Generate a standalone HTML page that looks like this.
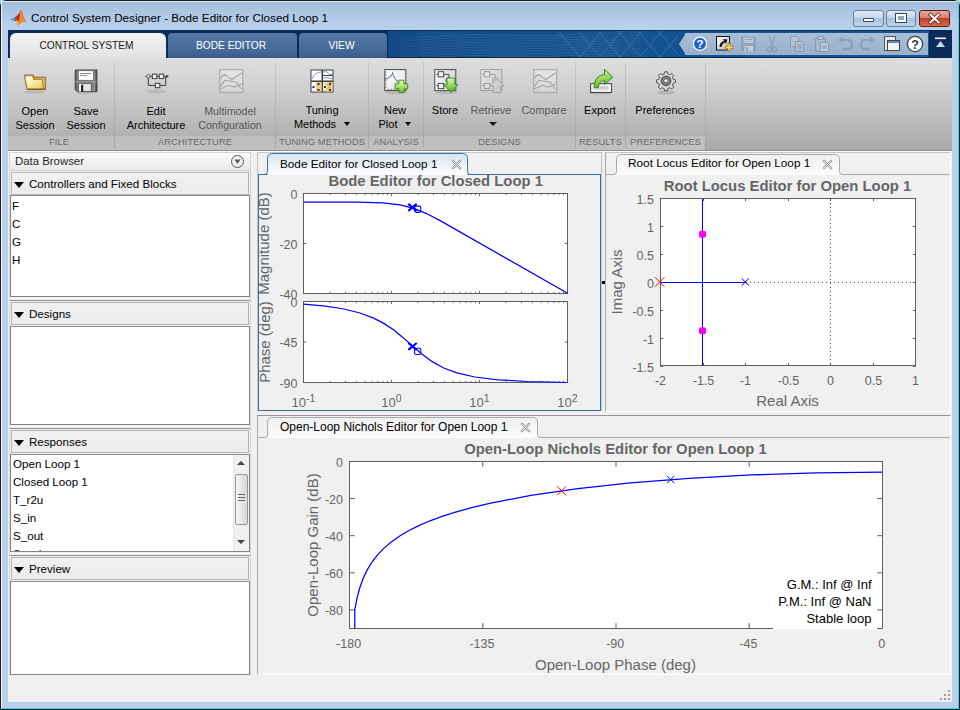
<!DOCTYPE html>
<html><head><meta charset="utf-8"><style>
*{margin:0;padding:0;box-sizing:border-box}
html,body{width:960px;height:710px;overflow:hidden}
body{position:relative;font-family:"Liberation Sans",sans-serif;background:#b9d1ea;color:#000}
.a{position:absolute}
.t{position:absolute;white-space:nowrap;line-height:1}
.tab{position:absolute;top:33px;height:25px;border-radius:4px 4px 0 0;color:#fff;font-size:10.2px;text-align:center;line-height:25px;padding-right:3px}
.lbl{position:absolute;font-size:11px;color:#000;text-align:center;white-space:nowrap;line-height:14px}
.dis{color:#585858}
.sec{position:absolute;top:135px;height:14px;font-size:9.3px;color:#6a6a6a;text-align:center;line-height:14px;letter-spacing:0.1px}
.sep{position:absolute;top:62px;width:1px;height:86px;background:linear-gradient(#c8c8c8,#a4a4a4)}
.hdr{position:absolute;left:11px;width:238px;height:23px;border:1px solid #b4b4b4;background:linear-gradient(#f1f1f1,#ececec);font-size:11.6px;line-height:21px}
.hdr .tri{position:absolute;left:2px;top:8.5px;width:0;height:0;border-left:5.5px solid transparent;border-right:5.5px solid transparent;border-top:6.5px solid #000}
.hdr span{position:absolute;left:17px;top:0px}
.list{position:absolute;left:10px;width:240px;background:#fff;border:1px solid #828790;border-top-color:#8a8f97}
.li{position:absolute;left:1px;font-size:11.6px;line-height:1;white-space:nowrap}
</style></head><body>
<!-- window frame -->
<div class="a" style="left:0;top:0;width:960px;height:710px;border:1px solid #1e1e1e;border-radius:6px 6px 0 0;background:#b9d1ea"></div>
<div class="a" style="left:1px;top:1px;width:958px;height:29px;border-radius:5px 5px 0 0;background:linear-gradient(#a2bddd,#b3cbe7 60%,#b9d1ea)"></div>
<div class="a" style="left:1px;top:1px;width:1px;height:707px;background:#f4f8fc"></div>
<div class="a" style="left:1px;top:1px;width:957px;height:1px;background:#dde8f3;border-radius:5px 5px 0 0"></div>
<div class="a" style="left:1px;top:708px;width:958px;height:1px;background:#3ad0f0"></div>
<div class="a" style="left:958px;top:2px;width:1px;height:707px;background:#3ad0f0"></div>
<!-- matlab logo -->
<svg class="a" style="left:6px;top:6px" width="24" height="24" viewBox="0 0 24 24">
<path d="M4,13.5 L11,10 L14.5,12.5 L10,15.5 Z" fill="#4a9be0"/>
<path d="M9,11.5 L13,7.5 L15,4 L16,5 L17.5,11 L20,16 L17,15 L11.5,19.5 L9.5,15 Z" fill="#b8321c"/>
<path d="M14.5,4.5 L16,5 L17.5,11 L20,16 L17,15 L12,19 L13.5,12 Z" fill="#f08a2c"/>
<path d="M9.5,15 L11.5,19.5 L13,17 L11,14 Z" fill="#f5c040"/>
</svg>
<div class="t" style="left:31px;top:12px;font-size:11.7px;color:#000">Control System Designer - Bode Editor for Closed Loop 1</div>
<!-- window buttons -->
<div class="a" style="left:853px;top:10px;width:31px;height:17px;border:1px solid #6a7f99;border-radius:3px;background:linear-gradient(#dce8f5 0%,#c5d8ee 45%,#a9c3df 50%,#bcd3ec 100%)"></div>
<div class="a" style="left:863px;top:18px;width:11px;height:4px;border:1px solid #39455a;background:#fff;border-radius:1px"></div>
<div class="a" style="left:886px;top:10px;width:30px;height:17px;border:1px solid #6a7f99;border-radius:3px;background:linear-gradient(#dce8f5 0%,#c5d8ee 45%,#a9c3df 50%,#bcd3ec 100%)"></div>
<div class="a" style="left:896px;top:14px;width:10px;height:8px;border:2px solid #fff;outline:1px solid #39455a;background:#8aa4c4"></div>
<div class="a" style="left:919px;top:10px;width:31px;height:17px;border:1px solid #5e1e16;border-radius:3px;background:linear-gradient(#e9a99a 0%,#d9826e 45%,#c2402a 50%,#d56a4f 100%)"></div>
<svg class="a" style="left:927px;top:12px" width="15" height="13" viewBox="0 0 15 13"><path d="M3.5,2.8 L11.5,10.2 M11.5,2.8 L3.5,10.2" stroke="#4a2018" stroke-width="3.6" stroke-linecap="square"/><path d="M3.5,2.8 L11.5,10.2 M11.5,2.8 L3.5,10.2" stroke="#fff" stroke-width="2.2" stroke-linecap="square"/></svg>
<!-- navy strip -->
<div class="a" style="left:8px;top:30px;width:944px;height:28px;background:#0b2a58"></div>
<div class="a" style="left:388px;top:31px;width:541px;height:26px;background:linear-gradient(90deg,#124a88,#14528f 40%,#15549a 100%)"></div>
<svg class="a" style="left:0;top:0" width="960" height="60"><defs><clipPath id="nc"><rect x="388" y="31" width="290" height="26"/></clipPath></defs><g clip-path="url(#nc)"><path d="M580,57 L602,31 M558,31 L580,57 M600,57 L622,31 M578,31 L600,57 M620,57 L642,31 M598,31 L620,57 M640,57 L662,31 M618,31 L640,57 M660,57 L682,31 M638,31 L660,57 M680,57 L702,31 M658,31 L680,57 M700,57 L722,31 M678,31 L700,57" stroke="#6d93c2" stroke-width="0.9" fill="none" opacity="0.45"/><path d="M400,39.0 Q500,29.0 620,41.0 M420,31.0 Q520,41.0 640,30.0 M400,41.6 Q500,31.6 620,43.6 M420,33.6 Q520,43.6 640,32.6 M400,44.2 Q500,34.2 620,46.2 M420,36.2 Q520,46.2 640,35.2 M400,46.8 Q500,36.8 620,48.8 M420,38.8 Q520,48.8 640,37.8 M400,49.4 Q500,39.4 620,51.4 M420,41.4 Q520,51.4 640,40.4 M400,52.0 Q500,42.0 620,54.0 M420,44.0 Q520,54.0 640,43.0 M400,54.6 Q500,44.6 620,56.6 M420,46.6 Q520,56.6 640,45.6 M400,57.2 Q500,47.2 620,59.2 M420,49.2 Q520,59.2 640,48.2 M400,59.8 Q500,49.8 620,61.8 M420,51.8 Q520,61.8 640,50.8 M400,62.4 Q500,52.4 620,64.4 M420,54.4 Q520,64.4 640,53.4" stroke="#6d93c2" stroke-width="0.6" fill="none" opacity="0.25"/></g></svg>
<!-- tabs -->
<div class="tab" style="left:10px;width:156px;background:linear-gradient(#f4f4f4,#e2e2e2);color:#1a1a1a;border-radius:6px 6px 0 0">CONTROL SYSTEM</div>
<div class="tab" style="left:168px;width:129px;background:linear-gradient(#5478a3,#46699a 70%,#3a5c8c)">BODE EDITOR</div>
<div class="tab" style="left:299px;width:88px;background:linear-gradient(#5478a3,#46699a 70%,#3a5c8c)">VIEW</div>
<!-- quick access -->
<div class="a" style="left:685px;top:33px;width:243px;height:22px;background:linear-gradient(#a9bfd7,#98b0cb)"></div>
<svg class="a" style="left:679px;top:33px" width="7" height="22"><path d="M7,0 L0,11 L7,22 Z" fill="#a1b8d1"/></svg>
<div class="a" style="left:929px;top:33px;width:23px;height:22px;background:#0b2b5a"></div>
<svg class="a" style="left:934px;top:36px" width="14" height="14" viewBox="0 0 14 14"><rect x="1" y="1.5" width="11" height="1.6" fill="#f0f4f8"/><path d="M2,11 L6.5,5 L11,11 Z" fill="#c8d6e6"/></svg>
<!-- toolstrip -->
<div class="a" style="left:8px;top:58px;width:944px;height:92px;background:linear-gradient(#dedede 0%,#cfcfcf 35%,#bababa 70%,#a9a9a9 100%)"></div>
<div class="a" style="left:8px;top:136px;width:697px;height:14px;background:linear-gradient(#bdbdbd,#c1c1c1)"></div>
<div class="a" style="left:8px;top:150px;width:944px;height:552px;background:#f0f0f0"></div>
<div class="a" style="left:8px;top:150px;width:944px;height:1px;background:#8e8e8e"></div>
<div class="a" style="left:8px;top:151px;width:944px;height:1px;background:#fbfbfb"></div>
<!-- separators -->
<div class="sep" style="left:114px"></div>
<div class="sep" style="left:275px"></div>
<div class="sep" style="left:368px"></div>
<div class="sep" style="left:423px"></div>
<div class="sep" style="left:575px"></div>
<div class="sep" style="left:625px"></div>
<div class="sep" style="left:705px"></div>
<!-- section labels -->
<div class="sec" style="left:6px;width:106px">FILE</div>
<div class="sec" style="left:115px;width:160px">ARCHITECTURE</div>
<div class="sec" style="left:276px;width:92px">TUNING METHODS</div>
<div class="sec" style="left:369px;width:54px">ANALYSIS</div>
<div class="sec" style="left:424px;width:151px">DESIGNS</div>
<div class="sec" style="left:576px;width:49px">RESULTS</div>
<div class="sec" style="left:626px;width:79px">PREFERENCES</div>
<!-- button labels -->
<div class="lbl" style="left:5px;width:60px;top:104px">Open<br>Session</div>
<div class="lbl" style="left:56px;width:60px;top:104px">Save<br>Session</div>
<div class="lbl" style="left:116px;width:80px;top:104px">Edit<br>Architecture</div>
<div class="lbl dis" style="left:190px;width:80px;top:104px;font-size:10.7px">Multimodel<br>Configuration</div>
<div class="lbl" style="left:282px;width:80px;top:103px">Tuning<br>Methods<i style="display:inline-block;width:0;height:0;border-left:3.5px solid transparent;border-right:3.5px solid transparent;border-top:4px solid #000;margin-left:8px;vertical-align:2px"></i></div>
<div class="lbl" style="left:365px;width:60px;top:103px">New<br>Plot<i style="display:inline-block;width:0;height:0;border-left:3.5px solid transparent;border-right:3.5px solid transparent;border-top:4px solid #000;margin-left:8px;vertical-align:2px"></i></div>
<div class="lbl" style="left:415px;width:60px;top:103px">Store</div>
<div class="lbl dis" style="left:461px;width:60px;top:103px">Retrieve<br><i style="display:inline-block;width:0;height:0;border-left:4px solid transparent;border-right:4px solid transparent;border-top:4.5px solid #1a1a1a;margin-left:3px;vertical-align:2px"></i></div>
<div class="lbl dis" style="left:514px;width:60px;top:103px">Compare</div>
<div class="lbl" style="left:570px;width:60px;top:103px">Export</div>
<div class="lbl" style="left:625px;width:80px;top:103px">Preferences</div>
<!-- icons -->
<svg class="a" style="left:18px;top:64px" width="32" height="32" viewBox="0 0 32 32">
<defs><linearGradient id="fold" x1="0" y1="0" x2="1" y2="1"><stop offset="0" stop-color="#ffffff"/><stop offset="0.35" stop-color="#fbf3c8"/><stop offset="0.75" stop-color="#f1d878"/><stop offset="1" stop-color="#e0bc50"/></linearGradient>
<linearGradient id="foldb" x1="0" y1="0" x2="1" y2="0"><stop offset="0" stop-color="#b88a34"/><stop offset="1" stop-color="#d8b56a"/></linearGradient></defs>
<ellipse cx="16" cy="28" rx="10" ry="1.8" fill="#000" opacity="0.1"/>
<path d="M6.3,11 H15.5 L16,13.1 H27.6 V25.3 H9 Z" fill="url(#foldb)" stroke="#8f6a22" stroke-width="0.9"/>
<path d="M6.8,11.8 H14.6 L15.4,15.4 H24.2 L25.8,25 H9.2 Z" fill="url(#fold)" stroke="#a57b26" stroke-width="0.8"/>
<path d="M9.2,25.2 H27.6" stroke="#6e5010" stroke-width="1"/>
</svg>
<svg class="a" style="left:70px;top:64px" width="32" height="32" viewBox="0 0 32 32">
<defs><linearGradient id="flp" x1="0" y1="0" x2="1" y2="0"><stop offset="0" stop-color="#4a4a4a"/><stop offset="0.12" stop-color="#8a8a8a"/><stop offset="0.5" stop-color="#7a7a7a"/><stop offset="0.88" stop-color="#8a8a8a"/><stop offset="1" stop-color="#454545"/></linearGradient></defs>
<ellipse cx="16" cy="29" rx="10" ry="1.5" fill="#000" opacity="0.08"/>
<path d="M5.2,5.9 H27 V27.7 H7.2 L5.2,25.7 Z" fill="url(#flp)" stroke="#3a3a3a" stroke-width="0.8"/>
<rect x="8.3" y="6.8" width="15.1" height="9.4" fill="#fff" stroke="#555" stroke-width="0.6"/>
<rect x="10" y="9" width="11" height="0.9" fill="#777"/><rect x="10" y="11" width="7" height="0.9" fill="#888"/>
<rect x="5.5" y="17.2" width="21.2" height="1.4" fill="#9a9a9a"/>
<rect x="8.6" y="19.4" width="12.6" height="8.2" fill="#e2e2e2" stroke="#333" stroke-width="0.6"/>
<rect x="9" y="19.8" width="2" height="7.6" fill="#fff"/>
<rect x="11" y="20.8" width="2.2" height="6.8" fill="#222"/>
</svg>
<svg class="a" style="left:140px;top:64px" width="32" height="32" viewBox="0 0 32 32">
<ellipse cx="16.5" cy="27.5" rx="10" ry="2" fill="#000" opacity="0.09"/>
<path d="M5.2,12.4 H27 M8.3,12.4 V21.4 H25.7 V12.4" stroke="#3e3e3e" stroke-width="1" fill="none"/>
<path d="M26.3,10.5 L28.8,12.4 L26.3,14.3 Z" fill="#3e3e3e"/>
<circle cx="8.3" cy="12.4" r="1.7" fill="#fff" stroke="#3e3e3e" stroke-width="0.9"/>
<rect x="12.3" y="10.1" width="4.5" height="4.5" fill="#eee" stroke="#3e3e3e" stroke-width="1"/>
<rect x="19.2" y="10.1" width="4.5" height="4.5" fill="#eee" stroke="#3e3e3e" stroke-width="1"/>
<rect x="15.3" y="19.3" width="4.5" height="4.4" fill="#eee" stroke="#3e3e3e" stroke-width="1"/>
</svg>
<svg class="a" style="left:214px;top:64px" width="32" height="32" viewBox="0 0 32 32">
<defs><linearGradient id="cg214" x1="0" y1="0" x2="0" y2="1"><stop offset="0" stop-color="#e6e6e6"/><stop offset="1" stop-color="#d6d6d6"/></linearGradient></defs>
<rect x="5.7" y="5.7" width="23" height="23" fill="url(#cg214)" stroke="#a9a9a9" stroke-width="1.1"/>
<path d="M6.3,14 L10.3,10.4 L17.8,15.5 L27.5,9 M6.3,22.3 L11,16.3 L22.5,18.2 L27,25 M6.3,25 L14.7,21.3 L19.8,23.1 L27.5,20.3" stroke="#a5a5a5" stroke-width="1.1" fill="none"/>
<path d="M8,28 v-1.3 M11,28 v-1.3 M14,28 v-1.3 M17,28 v-1.3 M20,28 v-1.3 M23,28 v-1.3 M26,28 v-1.3 M6.5,8 h1.3 M6.5,11 h1.3 M6.5,14 h1.3 M6.5,17 h1.3 M6.5,20 h1.3 M6.5,23 h1.3" stroke="#b8b8b8" stroke-width="0.9"/>
</svg>
<svg class="a" style="left:309px;top:68px" width="26" height="26" viewBox="0 0 26 26">
<rect x="1.5" y="1.5" width="23" height="23" fill="#3d3d3d"/>
<rect x="2.5" y="2.5" width="10" height="10" fill="#fff"/><rect x="14" y="2.5" width="9.5" height="4.5" fill="#fff"/><rect x="14" y="8" width="9.5" height="4.5" fill="#fff"/>
<rect x="2.5" y="14" width="10" height="9.5" fill="#fff"/><rect x="14" y="14" width="9.5" height="9.5" fill="#fff"/>
<rect x="7" y="14" width="5.5" height="9.5" fill="#f1cf7a"/><rect x="18" y="14" width="5.5" height="9.5" fill="#f1cf7a"/>
<path d="M3,11 Q6,4 12,4 M14,4 Q17,2 19,5 T23.5,6 M14,10 Q18,9 23.5,11" stroke="#6a8bb0" stroke-width="0.9" fill="none"/>
<path d="M15,15 L21,19 L15,23" stroke="#e8b040" stroke-width="1.2" fill="none"/>
<g fill="#1a3464"><rect x="3.5" y="18" width="2" height="2"/><rect x="8.5" y="15" width="2" height="2"/><rect x="8.5" y="21" width="2" height="2"/><rect x="20" y="15" width="2" height="2"/><rect x="20" y="21" width="2" height="2"/><rect x="15" y="18" width="2" height="2"/></g>
</svg>
<svg class="a" style="left:380px;top:64px" width="32" height="32" viewBox="0 0 32 32">
<defs><linearGradient id="npbg" x1="0" y1="0" x2="1" y2="1"><stop offset="0" stop-color="#fff"/><stop offset="1" stop-color="#e2e2e2"/></linearGradient>
<linearGradient id="grn2" x1="0" y1="0" x2="0" y2="1"><stop offset="0" stop-color="#e8f8c0"/><stop offset="0.55" stop-color="#a8dc64"/><stop offset="1" stop-color="#6cbf35"/></linearGradient></defs>
<ellipse cx="16" cy="28.5" rx="11" ry="1.8" fill="#000" opacity="0.1"/>
<rect x="4.8" y="5.6" width="21" height="21" fill="url(#npbg)" stroke="#4a4a4a" stroke-width="1"/>
<path d="M5.3,8 h1.2 M5.3,11 h1.2 M5.3,14 h1.2 M5.3,17 h1.2 M5.3,20 h1.2 M5.3,23 h1.2 M8,26 v-1.2 M11,26 v-1.2 M14,26 v-1.2 M17,26 v-1.2" stroke="#4a4a4a" stroke-width="0.9"/>
<path d="M5,15.3 Q10,14.5 12.6,9.2 Q14.5,15 18.5,18.3 Q21,19.8 25,19.8" stroke="#3a5f8f" stroke-width="1.2" fill="none" stroke-dasharray="1.2,0.6"/>
<path d="M18.9,16.2 h5 v3.6 h3.8 v5 h-3.8 v3.8 h-5 v-3.8 h-3.8 v-5 h3.8 z" fill="url(#grn2)" stroke="#2e8a1e" stroke-width="0.9"/>
</svg>
<svg class="a" style="left:430px;top:64px" width="32" height="32" viewBox="0 0 32 32">
<defs><linearGradient id="stbg" x1="0" y1="0" x2="1" y2="0.3"><stop offset="0" stop-color="#fdfdfd"/><stop offset="1" stop-color="#d4d4d4"/></linearGradient>
<linearGradient id="grn" x1="0" y1="0" x2="0" y2="1"><stop offset="0" stop-color="#e4f7c4"/><stop offset="0.5" stop-color="#9ad35c"/><stop offset="1" stop-color="#4fa52a"/></linearGradient></defs>
<ellipse cx="16" cy="28.5" rx="11" ry="1.8" fill="#000" opacity="0.1"/>
<rect x="4.8" y="5.6" width="21" height="21" fill="url(#stbg)" stroke="#4a4a4a" stroke-width="1"/>
<path d="M6.3,10.4 H8.2 M13.7,10.4 H19 V14 M6.3,21.6 H8.2 M13.7,21.6 H15.5" stroke="#3a3a3a" stroke-width="0.9" fill="none"/>
<rect x="8.2" y="7.7" width="5.5" height="5.2" fill="#f0f0f0" stroke="#3a3a3a" stroke-width="0.9"/>
<rect x="8.2" y="19.4" width="5.5" height="5.2" fill="#f0f0f0" stroke="#3a3a3a" stroke-width="0.9"/>
<path d="M19.5,14 A2.6,2.8 0 1 0 19.5,19" stroke="#3a3a3a" stroke-width="0.9" fill="none"/>
<path d="M17,14 H24.8 V20.7 H28 L21,28.6 L14,20.7 H17 Z" fill="url(#grn)" stroke="#2f8a1f" stroke-width="0.9"/>
</svg>
<svg class="a" style="left:476px;top:64px" width="32" height="32" viewBox="0 0 32 32" opacity="0.42">
<defs><linearGradient id="stbg2" x1="0" y1="0" x2="1" y2="0.3"><stop offset="0" stop-color="#fdfdfd"/><stop offset="1" stop-color="#cfcfcf"/></linearGradient></defs>
<rect x="4.8" y="5.6" width="21" height="21" fill="url(#stbg2)" stroke="#555" stroke-width="1"/>
<path d="M6.3,10.4 H8.2 M13.7,10.4 H19 V14 M6.3,21.6 H8.2" stroke="#444" stroke-width="0.9" fill="none"/>
<rect x="8.2" y="7.7" width="5.5" height="5.2" fill="#f0f0f0" stroke="#444" stroke-width="0.9"/>
<rect x="8.2" y="19.4" width="5.5" height="5.2" fill="#f0f0f0" stroke="#444" stroke-width="0.9"/>
<circle cx="19.5" cy="16.5" r="2.8" fill="#ddd" stroke="#444" stroke-width="0.9"/>
<path d="M17,28.6 H24.8 V21.9 H28 L21,14 L14,21.9 H17 Z" fill="#c8c8c8" stroke="#555" stroke-width="0.9"/>
</svg>
<svg class="a" style="left:528px;top:64px" width="32" height="32" viewBox="0 0 32 32">
<defs><linearGradient id="cg528" x1="0" y1="0" x2="0" y2="1"><stop offset="0" stop-color="#e6e6e6"/><stop offset="1" stop-color="#d6d6d6"/></linearGradient></defs>
<rect x="5.7" y="5.7" width="23" height="23" fill="url(#cg528)" stroke="#a9a9a9" stroke-width="1.1"/>
<path d="M6.3,14 L10.3,10.4 L17.8,15.5 L27.5,9 M6.3,22.3 L11,16.3 L22.5,18.2 L27,25 M6.3,25 L14.7,21.3 L19.8,23.1 L27.5,20.3" stroke="#a5a5a5" stroke-width="1.1" fill="none"/>
<path d="M8,28 v-1.3 M11,28 v-1.3 M14,28 v-1.3 M17,28 v-1.3 M20,28 v-1.3 M23,28 v-1.3 M26,28 v-1.3 M6.5,8 h1.3 M6.5,11 h1.3 M6.5,14 h1.3 M6.5,17 h1.3 M6.5,20 h1.3 M6.5,23 h1.3" stroke="#b8b8b8" stroke-width="0.9"/>
</svg>
<svg class="a" style="left:584px;top:64px" width="32" height="32" viewBox="0 0 32 32">
<defs><linearGradient id="extr" x1="0" y1="0" x2="0" y2="1"><stop offset="0" stop-color="#fafafa"/><stop offset="1" stop-color="#e8e8e8"/></linearGradient>
<linearGradient id="grn3" x1="0" y1="0" x2="0.3" y2="1"><stop offset="0" stop-color="#e6f8c8"/><stop offset="0.5" stop-color="#a6d96a"/><stop offset="1" stop-color="#5fb52f"/></linearGradient></defs>
<ellipse cx="16" cy="29.5" rx="11" ry="1.5" fill="#000" opacity="0.1"/>
<rect x="6.6" y="19.7" width="21" height="8.8" fill="url(#extr)" stroke="#3f3f3f" stroke-width="1"/>
<rect x="9.5" y="22.2" width="15" height="3.3" fill="#cdcdcd"/>
<path d="M10.1,23.6 C10.1,15.5 14,11 20.5,10.6 L20.5,5.4 L28.8,13.1 L20.5,20.5 L20.5,16.6 C17.2,16.6 15,19.2 14,23.6 Z" fill="url(#grn3)" stroke="#2e8a1e" stroke-width="1"/>
</svg>
<svg class="a" style="left:654px;top:69px" width="24" height="26" viewBox="0 0 24 26"><ellipse cx="12" cy="23.5" rx="9" ry="2" fill="#000" opacity="0.12"/><g transform="translate(12,11.8) scale(0.9) translate(-12,-11.5)">

<path d="M10.5,1.5 h3 l0.6,2.4 l2.2,0.9 l2.1,-1.3 l2.1,2.1 l-1.3,2.1 l0.9,2.2 l2.4,0.6 v3 l-2.4,0.6 l-0.9,2.2 l1.3,2.1 l-2.1,2.1 l-2.1,-1.3 l-2.2,0.9 l-0.6,2.4 h-3 l-0.6,-2.4 l-2.2,-0.9 l-2.1,1.3 l-2.1,-2.1 l1.3,-2.1 l-0.9,-2.2 l-2.4,-0.6 v-3 l2.4,-0.6 l0.9,-2.2 l-1.3,-2.1 l2.1,-2.1 l2.1,1.3 l2.2,-0.9 Z" fill="#d8d8d8" stroke="#444" stroke-width="1"/>
<circle cx="12" cy="11.5" r="6" fill="#555"/>
<circle cx="12" cy="11.5" r="4.5" fill="#888"/>
<circle cx="12" cy="11.5" r="2.4" fill="#eee" stroke="#333" stroke-width="0.8"/>
</g></svg>
<!-- quick access icons -->
<svg class="a" style="left:691px;top:35px" width="18" height="18" viewBox="0 0 18 18"><circle cx="9" cy="8.7" r="6.6" fill="#1a63c9" stroke="#fff" stroke-width="1.3"/><text x="9" y="13" text-anchor="middle" font-family="Liberation Sans" font-weight="bold" font-size="11.5" fill="#fff">?</text></svg>
<svg class="a" style="left:715px;top:35px" width="19" height="18" viewBox="0 0 19 18"><defs><linearGradient id="sc" x1="0" y1="0" x2="1" y2="1"><stop offset="0" stop-color="#fff"/><stop offset="1" stop-color="#bbb"/></linearGradient></defs><rect x="1.5" y="1.5" width="13" height="13.5" fill="url(#sc)" stroke="#111" stroke-width="1"/><path d="M4.5,12 Q4.5,7 9,6 L8,4 L12.5,4.5 L11,9 L10,7.5 Q7,8.5 6.5,12 Z" fill="#1a1a1a"/><path d="M10.5,11 h2.5 v-2.5 h2.6 v2.5 h2.5 v2.6 h-2.5 v2.5 h-2.6 v-2.5 h-2.5z" fill="#f6d36a" stroke="#a27a1c" stroke-width="0.8"/></svg>
<g></g>
<svg class="a" style="left:740px;top:35px" width="17" height="18" viewBox="0 0 17 18"><path d="M1,1.5 h15 v15 h-13 l-2,-2z" fill="#8fa1b6"/><rect x="3.5" y="2.5" width="10" height="5.5" fill="#b9c6d6"/><rect x="5" y="4" width="7" height="1" fill="#8fa1b6"/><rect x="4.5" y="11" width="8.5" height="5.5" fill="#c4d0de"/><rect x="6" y="12" width="2.2" height="4.5" fill="#8fa1b6"/></svg>
<svg class="a" style="left:765px;top:35px" width="14" height="18" viewBox="0 0 14 18" opacity="0.6"><path d="M4,1 L8,12 M10,1 L6,12" stroke="#8090a4" stroke-width="1.2"/><circle cx="4.5" cy="14.5" r="2.3" fill="none" stroke="#8090a4" stroke-width="1.2"/><circle cx="9.5" cy="14.5" r="2.3" fill="none" stroke="#8090a4" stroke-width="1.2"/></svg>
<svg class="a" style="left:789px;top:35px" width="16" height="18" viewBox="0 0 16 18" opacity="0.6"><path d="M1.5,1.5 h6 l2,2 v8 h-8z" fill="#c4ceda" stroke="#7a889a"/><path d="M6.5,6.5 h6 l2,2 v8 h-8z" fill="#c4ceda" stroke="#7a889a"/><path d="M8,10 h5 M8,12 h5 M8,14 h5" stroke="#7a889a"/></svg>
<svg class="a" style="left:814px;top:35px" width="16" height="18" viewBox="0 0 16 18" opacity="0.6"><rect x="1.5" y="3.5" width="10" height="13" fill="#b0bccb" stroke="#7a889a"/><rect x="4" y="1.5" width="5" height="3" fill="#c4ceda" stroke="#7a889a"/><path d="M6.5,7.5 h6 l2,2 v7 h-8z" fill="#d4dde7" stroke="#7a889a"/><path d="M8,11 h5 M8,13 h5" stroke="#7a889a"/></svg>
<svg class="a" style="left:837px;top:36px" width="17" height="16" viewBox="0 0 17 16" opacity="0.6"><path d="M4,4 L11,4 Q15,4 15,8.5 Q15,13 11,13 L6,13" stroke="#7e8ea2" stroke-width="2.2" fill="none"/><path d="M1,4 L6,0.5 L6,7.5 Z" fill="#7e8ea2"/></svg>
<svg class="a" style="left:859px;top:36px" width="17" height="16" viewBox="0 0 17 16" opacity="0.6"><path d="M13,4 L6,4 Q2,4 2,8.5 Q2,13 6,13 L11,13" stroke="#7e8ea2" stroke-width="2.2" fill="none"/><path d="M16,4 L11,0.5 L11,7.5 Z" fill="#7e8ea2"/></svg>
<svg class="a" style="left:883px;top:35px" width="18" height="18" viewBox="0 0 18 18"><rect x="1.5" y="1.5" width="11" height="14" fill="#e8e8e8" stroke="#555"/><rect x="4.5" y="5.5" width="12" height="10" fill="#f4f4f4" stroke="#444"/><rect x="5" y="6" width="11" height="2" fill="#5b8fd0"/></svg>
<svg class="a" style="left:906px;top:35px" width="18" height="18" viewBox="0 0 18 18"><circle cx="9" cy="9" r="7.6" fill="#fff" stroke="#3a4a5e" stroke-width="1.4"/><text x="9" y="13.6" text-anchor="middle" font-family="Liberation Sans" font-weight="bold" font-size="12.5" fill="#2b3a4e">?</text></svg>
<!-- left panel -->
<div class="a" style="left:9px;top:152px;width:242px;height:523px;border:1px solid #d4d4d4;background:#f0f0f0"></div>
<div class="a" style="left:10px;top:153px;width:240px;height:18px;background:linear-gradient(#fbfbfb,#e9e9e9);border-bottom:1px solid #cfcfcf"></div>
<div class="t" style="left:15px;top:156px;font-size:11.4px;color:#1e1e1e">Data Browser</div>
<svg class="a" style="left:230px;top:154px" width="15" height="15" viewBox="0 0 15 15"><circle cx="7.5" cy="7.5" r="6" fill="none" stroke="#555" stroke-width="1"/><path d="M4.5,5.5 L10.5,5.5 L7.5,10 Z" fill="#555"/></svg>

<div class="hdr" style="top:172px"><div class="tri"></div><span>Controllers and Fixed Blocks</span></div>
<div class="list" style="top:195px;height:102px">
<div class="li" style="top:4px">F</div><div class="li" style="top:22px">C</div><div class="li" style="top:40px">G</div><div class="li" style="top:58px">H</div>
</div>
<div class="a" style="left:10px;top:300px;width:240px;height:1px;background:#8e8e8e"></div><div class="a" style="left:10px;top:298px;width:240px;height:1px;background:#fafafa"></div><div class="hdr" style="top:302px"><div class="tri"></div><span>Designs</span></div>
<div class="list" style="top:326px;height:99px"></div>
<div class="a" style="left:10px;top:428px;width:240px;height:1px;background:#8e8e8e"></div><div class="a" style="left:10px;top:426px;width:240px;height:1px;background:#fafafa"></div><div class="hdr" style="top:430px"><div class="tri"></div><span>Responses</span></div>
<div class="list" style="top:454px;height:98px;overflow:hidden">
<div class="li" style="top:3px;left:2px">Open Loop 1</div><div class="li" style="top:21px;left:2px">Closed Loop 1</div><div class="li" style="top:39px;left:2px">T_r2u</div><div class="li" style="top:57px;left:2px">S_in</div><div class="li" style="top:75px;left:2px">S_out</div><div class="li" style="top:93px;left:2px">S_ysig</div>
<div class="a" style="left:222px;top:0;width:16px;height:96px;background:#f0f0f0;border-left:1px solid #e8e8e8"></div>
<svg class="a" style="left:225px;top:5px" width="10" height="6"><path d="M1,5 L5,1 L9,5Z" fill="#444"/></svg>
<svg class="a" style="left:225px;top:84px" width="10" height="6"><path d="M1,1 L5,5 L9,1Z" fill="#444"/></svg>
<div class="a" style="left:224px;top:19px;width:13px;height:51px;border:1px solid #9a9a9a;border-radius:2px;background:linear-gradient(90deg,#f6f6f6,#d8d8d8)"></div>
<div class="a" style="left:227px;top:39px;width:7px;height:1px;background:#666"></div>
<div class="a" style="left:227px;top:42px;width:7px;height:1px;background:#666"></div>
<div class="a" style="left:227px;top:45px;width:7px;height:1px;background:#666"></div>
</div>
<div class="a" style="left:10px;top:555px;width:240px;height:1px;background:#8e8e8e"></div><div class="a" style="left:10px;top:553px;width:240px;height:1px;background:#fafafa"></div><div class="hdr" style="top:557px"><div class="tri"></div><span>Preview</span></div>
<div class="list" style="top:581px;height:94px"></div>
<!-- editors frame -->
<div class="a" style="left:257px;top:152px;width:345px;height:259px;border:1px solid #c4c4c4;border-bottom:none"></div>
<div class="a" style="left:605px;top:152px;width:346px;height:260px;border-left:1px solid #a9a9a9;border-top:1px solid #c4c4c4;border-right:1px solid #fff;border-bottom:1px solid #fff"></div>
<div class="a" style="left:257px;top:415px;width:694px;height:260px;border-left:1px solid #a9a9a9;border-top:1px solid #959595;border-right:1px solid #fff;border-bottom:1px solid #fff"></div>
<!-- bode tab -->
<div class="a" style="left:258px;top:174px;width:343px;height:237px;border:1px solid #3f6ea6"></div>
<svg class="a" style="left:0;top:0" width="960" height="710"><defs><linearGradient id="tgb" x1="0" y1="0" x2="0" y2="1"><stop offset="0" stop-color="#d6e3f1"/><stop offset="1" stop-color="#ffffff"/></linearGradient></defs>
<path d="M267.5,175 V158.5 Q267.5,153.5 272.5,153.5 H462.5 Q467.5,153.5 467.5,158.5 V175" fill="url(#tgb)" stroke="none"/>
<path d="M258.5,174.5 H264.5 Q267.5,174.5 267.5,171.5 V158.5 Q267.5,153.5 272.5,153.5 H462.5 Q467.5,153.5 467.5,158.5 V171.5 Q467.5,174.5 470.5,174.5 H600.5" fill="none" stroke="#3f6ea6" stroke-width="1"/></svg>
<div class="t" style="left:280px;top:158px;font-size:11.75px">Bode Editor for Closed Loop 1</div>
<svg class="a" style="left:451px;top:159px" width="11" height="11" viewBox="0 0 11 11"><path d="M1.8,1.8 L9.2,9.2 M9.2,1.8 L1.8,9.2" stroke="#959595" stroke-width="2.3" stroke-linecap="round"/><path d="M1.8,1.8 L9.2,9.2 M9.2,1.8 L1.8,9.2" stroke="#eef1f5" stroke-width="1" stroke-linecap="round"/></svg>
<!-- RL tab -->
<svg class="a" style="left:0;top:0" width="960" height="710"><defs><linearGradient id="tgr" x1="0" y1="0" x2="0" y2="1"><stop offset="0" stop-color="#f0f0f0"/><stop offset="1" stop-color="#fcfcfc"/></linearGradient></defs>
<path d="M616.5,175 V159.5 Q616.5,154.5 621.5,154.5 H834.5 Q839.5,154.5 839.5,159.5 V175" fill="url(#tgr)" stroke="none"/>
<path d="M605.5,174.5 H613.5 Q616.5,174.5 616.5,171.5 V159.5 Q616.5,154.5 621.5,154.5 H834.5 Q839.5,154.5 839.5,159.5 V171.5 Q839.5,174.5 842.5,174.5 H950" fill="none" stroke="#a9a9a9" stroke-width="1"/></svg>
<div class="t" style="left:628px;top:158px;font-size:11.8px">Root Locus Editor for Open Loop 1</div>
<svg class="a" style="left:822px;top:159px" width="11" height="11" viewBox="0 0 11 11"><path d="M1.8,1.8 L9.2,9.2 M9.2,1.8 L1.8,9.2" stroke="#959595" stroke-width="2.3" stroke-linecap="round"/><path d="M1.8,1.8 L9.2,9.2 M9.2,1.8 L1.8,9.2" stroke="#eef1f5" stroke-width="1" stroke-linecap="round"/></svg>
<!-- Nichols tab -->
<svg class="a" style="left:0;top:0" width="960" height="710"><defs><linearGradient id="tgn" x1="0" y1="0" x2="0" y2="1"><stop offset="0" stop-color="#f0f0f0"/><stop offset="1" stop-color="#fcfcfc"/></linearGradient></defs>
<path d="M267.5,438 V422.5 Q267.5,417.5 272.5,417.5 H532.5 Q537.5,417.5 537.5,422.5 V438" fill="url(#tgn)" stroke="none"/>
<path d="M257.5,437.5 H264.5 Q267.5,437.5 267.5,434.5 V422.5 Q267.5,417.5 272.5,417.5 H532.5 Q537.5,417.5 537.5,422.5 V434.5 Q537.5,437.5 540.5,437.5 H950" fill="none" stroke="#a9a9a9" stroke-width="1"/></svg>
<div class="t" style="left:280px;top:421px;font-size:12px">Open-Loop Nichols Editor for Open Loop 1</div>
<svg class="a" style="left:520px;top:422px" width="11" height="11" viewBox="0 0 11 11"><path d="M1.8,1.8 L9.2,9.2 M9.2,1.8 L1.8,9.2" stroke="#959595" stroke-width="2.3" stroke-linecap="round"/><path d="M1.8,1.8 L9.2,9.2 M9.2,1.8 L1.8,9.2" stroke="#eef1f5" stroke-width="1" stroke-linecap="round"/></svg>
<div class="a" style="left:602px;top:281px;width:3px;height:3px;background:#000"></div>
<!-- grip -->
<div class="a" style="left:948px;top:690px;width:2px;height:2px;background:#a19f8d;box-shadow:-4px 4px 0 #a19f8d,0 4px 0 #a19f8d,-8px 8px 0 #a19f8d,-4px 8px 0 #a19f8d,0 8px 0 #a19f8d"></div>
<svg class="a" style="left:0;top:0" width="960" height="710" viewBox="0 0 960 710" font-family="Liberation Sans, sans-serif">
<text x="435.7" y="186" font-size="14.85" fill="#666666" text-anchor="middle" font-weight="bold" >Bode Editor for Closed Loop 1</text>
<rect x="303.5" y="193.5" width="264.0" height="100.0" fill="#fff" stroke="#5e5e5e" stroke-width="1"/>
<path d="M329.99,293.5 v-1.6 M329.99,193.5 v1.6" stroke="#5e5e5e" stroke-width="0.9"/>
<path d="M345.49,293.5 v-1.6 M345.49,193.5 v1.6" stroke="#5e5e5e" stroke-width="0.9"/>
<path d="M356.48,293.5 v-1.6 M356.48,193.5 v1.6" stroke="#5e5e5e" stroke-width="0.9"/>
<path d="M365.01,293.5 v-1.6 M365.01,193.5 v1.6" stroke="#5e5e5e" stroke-width="0.9"/>
<path d="M371.98,293.5 v-1.6 M371.98,193.5 v1.6" stroke="#5e5e5e" stroke-width="0.9"/>
<path d="M377.87,293.5 v-1.6 M377.87,193.5 v1.6" stroke="#5e5e5e" stroke-width="0.9"/>
<path d="M382.97,293.5 v-1.6 M382.97,193.5 v1.6" stroke="#5e5e5e" stroke-width="0.9"/>
<path d="M387.47,293.5 v-1.6 M387.47,193.5 v1.6" stroke="#5e5e5e" stroke-width="0.9"/>
<path d="M391.50,293.5 v-2.6 M391.50,193.5 v2.6" stroke="#5e5e5e" stroke-width="0.9"/>
<path d="M417.99,293.5 v-1.6 M417.99,193.5 v1.6" stroke="#5e5e5e" stroke-width="0.9"/>
<path d="M433.49,293.5 v-1.6 M433.49,193.5 v1.6" stroke="#5e5e5e" stroke-width="0.9"/>
<path d="M444.48,293.5 v-1.6 M444.48,193.5 v1.6" stroke="#5e5e5e" stroke-width="0.9"/>
<path d="M453.01,293.5 v-1.6 M453.01,193.5 v1.6" stroke="#5e5e5e" stroke-width="0.9"/>
<path d="M459.98,293.5 v-1.6 M459.98,193.5 v1.6" stroke="#5e5e5e" stroke-width="0.9"/>
<path d="M465.87,293.5 v-1.6 M465.87,193.5 v1.6" stroke="#5e5e5e" stroke-width="0.9"/>
<path d="M470.97,293.5 v-1.6 M470.97,193.5 v1.6" stroke="#5e5e5e" stroke-width="0.9"/>
<path d="M475.47,293.5 v-1.6 M475.47,193.5 v1.6" stroke="#5e5e5e" stroke-width="0.9"/>
<path d="M479.50,293.5 v-2.6 M479.50,193.5 v2.6" stroke="#5e5e5e" stroke-width="0.9"/>
<path d="M505.99,293.5 v-1.6 M505.99,193.5 v1.6" stroke="#5e5e5e" stroke-width="0.9"/>
<path d="M521.49,293.5 v-1.6 M521.49,193.5 v1.6" stroke="#5e5e5e" stroke-width="0.9"/>
<path d="M532.48,293.5 v-1.6 M532.48,193.5 v1.6" stroke="#5e5e5e" stroke-width="0.9"/>
<path d="M541.01,293.5 v-1.6 M541.01,193.5 v1.6" stroke="#5e5e5e" stroke-width="0.9"/>
<path d="M547.98,293.5 v-1.6 M547.98,193.5 v1.6" stroke="#5e5e5e" stroke-width="0.9"/>
<path d="M553.87,293.5 v-1.6 M553.87,193.5 v1.6" stroke="#5e5e5e" stroke-width="0.9"/>
<path d="M558.97,293.5 v-1.6 M558.97,193.5 v1.6" stroke="#5e5e5e" stroke-width="0.9"/>
<path d="M563.47,293.5 v-1.6 M563.47,193.5 v1.6" stroke="#5e5e5e" stroke-width="0.9"/>
<rect x="303.5" y="301.5" width="264.0" height="81.0" fill="#fff" stroke="#5e5e5e" stroke-width="1"/>
<path d="M329.99,382.5 v-1.6 M329.99,301.5 v1.6" stroke="#5e5e5e" stroke-width="0.9"/>
<path d="M345.49,382.5 v-1.6 M345.49,301.5 v1.6" stroke="#5e5e5e" stroke-width="0.9"/>
<path d="M356.48,382.5 v-1.6 M356.48,301.5 v1.6" stroke="#5e5e5e" stroke-width="0.9"/>
<path d="M365.01,382.5 v-1.6 M365.01,301.5 v1.6" stroke="#5e5e5e" stroke-width="0.9"/>
<path d="M371.98,382.5 v-1.6 M371.98,301.5 v1.6" stroke="#5e5e5e" stroke-width="0.9"/>
<path d="M377.87,382.5 v-1.6 M377.87,301.5 v1.6" stroke="#5e5e5e" stroke-width="0.9"/>
<path d="M382.97,382.5 v-1.6 M382.97,301.5 v1.6" stroke="#5e5e5e" stroke-width="0.9"/>
<path d="M387.47,382.5 v-1.6 M387.47,301.5 v1.6" stroke="#5e5e5e" stroke-width="0.9"/>
<path d="M391.50,382.5 v-2.6 M391.50,301.5 v2.6" stroke="#5e5e5e" stroke-width="0.9"/>
<path d="M417.99,382.5 v-1.6 M417.99,301.5 v1.6" stroke="#5e5e5e" stroke-width="0.9"/>
<path d="M433.49,382.5 v-1.6 M433.49,301.5 v1.6" stroke="#5e5e5e" stroke-width="0.9"/>
<path d="M444.48,382.5 v-1.6 M444.48,301.5 v1.6" stroke="#5e5e5e" stroke-width="0.9"/>
<path d="M453.01,382.5 v-1.6 M453.01,301.5 v1.6" stroke="#5e5e5e" stroke-width="0.9"/>
<path d="M459.98,382.5 v-1.6 M459.98,301.5 v1.6" stroke="#5e5e5e" stroke-width="0.9"/>
<path d="M465.87,382.5 v-1.6 M465.87,301.5 v1.6" stroke="#5e5e5e" stroke-width="0.9"/>
<path d="M470.97,382.5 v-1.6 M470.97,301.5 v1.6" stroke="#5e5e5e" stroke-width="0.9"/>
<path d="M475.47,382.5 v-1.6 M475.47,301.5 v1.6" stroke="#5e5e5e" stroke-width="0.9"/>
<path d="M479.50,382.5 v-2.6 M479.50,301.5 v2.6" stroke="#5e5e5e" stroke-width="0.9"/>
<path d="M505.99,382.5 v-1.6 M505.99,301.5 v1.6" stroke="#5e5e5e" stroke-width="0.9"/>
<path d="M521.49,382.5 v-1.6 M521.49,301.5 v1.6" stroke="#5e5e5e" stroke-width="0.9"/>
<path d="M532.48,382.5 v-1.6 M532.48,301.5 v1.6" stroke="#5e5e5e" stroke-width="0.9"/>
<path d="M541.01,382.5 v-1.6 M541.01,301.5 v1.6" stroke="#5e5e5e" stroke-width="0.9"/>
<path d="M547.98,382.5 v-1.6 M547.98,301.5 v1.6" stroke="#5e5e5e" stroke-width="0.9"/>
<path d="M553.87,382.5 v-1.6 M553.87,301.5 v1.6" stroke="#5e5e5e" stroke-width="0.9"/>
<path d="M558.97,382.5 v-1.6 M558.97,301.5 v1.6" stroke="#5e5e5e" stroke-width="0.9"/>
<path d="M563.47,382.5 v-1.6 M563.47,301.5 v1.6" stroke="#5e5e5e" stroke-width="0.9"/>
<path d="M303.5,193.5 h2.6 M567.5,193.5 h-2.6" stroke="#5e5e5e"/>
<text x="297.5" y="198.8" font-size="12.5" fill="#666666" text-anchor="end" font-weight="normal" >0</text>
<path d="M303.5,243.5 h2.6 M567.5,243.5 h-2.6" stroke="#5e5e5e"/>
<text x="297.5" y="248.8" font-size="12.5" fill="#666666" text-anchor="end" font-weight="normal" >-20</text>
<path d="M303.5,293.5 h2.6 M567.5,293.5 h-2.6" stroke="#5e5e5e"/>
<text x="297.5" y="298.8" font-size="12.5" fill="#666666" text-anchor="end" font-weight="normal" >-40</text>
<path d="M303.5,301.5 h2.6 M567.5,301.5 h-2.6" stroke="#5e5e5e"/>
<text x="297.5" y="306.8" font-size="12.5" fill="#666666" text-anchor="end" font-weight="normal" >0</text>
<path d="M303.5,342.0 h2.6 M567.5,342.0 h-2.6" stroke="#5e5e5e"/>
<text x="297.5" y="347.3" font-size="12.5" fill="#666666" text-anchor="end" font-weight="normal" >-45</text>
<path d="M303.5,382.5 h2.6 M567.5,382.5 h-2.6" stroke="#5e5e5e"/>
<text x="297.5" y="387.8" font-size="12.5" fill="#666666" text-anchor="end" font-weight="normal" >-90</text>
<text x="303.5" y="407" font-size="13" fill="#666666" text-anchor="middle">10<tspan dy="-5.5" font-size="10.5">-1</tspan></text>
<text x="391.5" y="407" font-size="13" fill="#666666" text-anchor="middle">10<tspan dy="-5.5" font-size="10.5">0</tspan></text>
<text x="479.5" y="407" font-size="13" fill="#666666" text-anchor="middle">10<tspan dy="-5.5" font-size="10.5">1</tspan></text>
<text x="567.5" y="407" font-size="13" fill="#666666" text-anchor="middle">10<tspan dy="-5.5" font-size="10.5">2</tspan></text>
<text transform="translate(268.5,243.5) rotate(-90)" x="0" y="0" font-size="15" fill="#666666" text-anchor="middle">Magnitude (dB)</text>
<text transform="translate(269.5,342.0) rotate(-90)" x="0" y="0" font-size="15" fill="#666666" text-anchor="middle">Phase (deg)</text>
<path d="M303.5,202.8 L358.2,203.0 L382.8,203.7 L400.0,205.6 L414.1,209.2 L426.0,214.1 L440.6,221.7 L567.5,294.0" stroke="#0000ff" fill="none" stroke-width="1.25" transform="translate(0,-0.8)"/>
<path d="M303.5,304.1 L325.5,306.1 L344.0,309.0 L359.9,313.0 L373.6,318.1 L383.7,323.4 L393.9,330.1 L402.2,336.9 L421.2,353.5 L431.8,361.4 L443.7,368.0 L456.9,372.9 L474.9,377.0 L497.9,379.8 L527.4,381.5 L567.5,382.5" stroke="#0000ff" fill="none" stroke-width="1.25"/>
<path d="M408.3,203.9 L416.7,210.9 M416.7,203.9 L408.3,210.9" stroke="#0000ff" stroke-width="2.1"/>
<rect x="414.6" y="206.1" width="6.2" height="6.3" rx="1.6" fill="none" stroke="#0000ff" stroke-width="1.1"/>
<path d="M408.3,343 L416.7,349.9 M416.7,343 L408.3,349.9" stroke="#0000ff" stroke-width="2.1"/>
<rect x="414.6" y="348.2" width="6.2" height="6.3" rx="1.6" fill="none" stroke="#0000ff" stroke-width="1.1"/>
<text x="787.5" y="191" font-size="14.85" fill="#666666" text-anchor="middle" font-weight="bold" >Root Locus Editor for Open Loop 1</text>
<rect x="660.5" y="198.5" width="255.0" height="167.0" fill="#fff" stroke="#5e5e5e" stroke-width="1"/>
<path d="M660.5,365.5 v-2.6 M660.5,198.5 v2.6" stroke="#5e5e5e"/>
<text x="660.5" y="385" font-size="12.5" fill="#666666" text-anchor="middle" font-weight="normal" >-2</text>
<path d="M703.5,365.5 v-2.6 M703.5,198.5 v2.6" stroke="#5e5e5e"/>
<text x="703.5" y="385" font-size="12.5" fill="#666666" text-anchor="middle" font-weight="normal" >-1.5</text>
<path d="M745.5,365.5 v-2.6 M745.5,198.5 v2.6" stroke="#5e5e5e"/>
<text x="745.5" y="385" font-size="12.5" fill="#666666" text-anchor="middle" font-weight="normal" >-1</text>
<path d="M788.5,365.5 v-2.6 M788.5,198.5 v2.6" stroke="#5e5e5e"/>
<text x="788.5" y="385" font-size="12.5" fill="#666666" text-anchor="middle" font-weight="normal" >-0.5</text>
<path d="M830.5,365.5 v-2.6 M830.5,198.5 v2.6" stroke="#5e5e5e"/>
<text x="830.5" y="385" font-size="12.5" fill="#666666" text-anchor="middle" font-weight="normal" >0</text>
<path d="M873.5,365.5 v-2.6 M873.5,198.5 v2.6" stroke="#5e5e5e"/>
<text x="873.5" y="385" font-size="12.5" fill="#666666" text-anchor="middle" font-weight="normal" >0.5</text>
<path d="M915.5,365.5 v-2.6 M915.5,198.5 v2.6" stroke="#5e5e5e"/>
<text x="915.5" y="385" font-size="12.5" fill="#666666" text-anchor="middle" font-weight="normal" >1</text>
<path d="M660.5,366.5 h2.6 M915.5,366.5 h-2.6" stroke="#5e5e5e"/>
<text x="654" y="371.5" font-size="12.5" fill="#666666" text-anchor="end" font-weight="normal" >-1.5</text>
<path d="M660.5,338.5 h2.6 M915.5,338.5 h-2.6" stroke="#5e5e5e"/>
<text x="654" y="343.5" font-size="12.5" fill="#666666" text-anchor="end" font-weight="normal" >-1</text>
<path d="M660.5,310.5 h2.6 M915.5,310.5 h-2.6" stroke="#5e5e5e"/>
<text x="654" y="315.5" font-size="12.5" fill="#666666" text-anchor="end" font-weight="normal" >-0.5</text>
<path d="M660.5,282.5 h2.6 M915.5,282.5 h-2.6" stroke="#5e5e5e"/>
<text x="654" y="287.5" font-size="12.5" fill="#666666" text-anchor="end" font-weight="normal" >0</text>
<path d="M660.5,254.5 h2.6 M915.5,254.5 h-2.6" stroke="#5e5e5e"/>
<text x="654" y="259.5" font-size="12.5" fill="#666666" text-anchor="end" font-weight="normal" >0.5</text>
<path d="M660.5,226.5 h2.6 M915.5,226.5 h-2.6" stroke="#5e5e5e"/>
<text x="654" y="231.5" font-size="12.5" fill="#666666" text-anchor="end" font-weight="normal" >1</text>
<path d="M660.5,198.5 h2.6 M915.5,198.5 h-2.6" stroke="#5e5e5e"/>
<text x="654" y="203.5" font-size="12.5" fill="#666666" text-anchor="end" font-weight="normal" >1.5</text>
<path d="M830.5,198.5 V365.5 M745.5,282.5 H915.5" stroke="#4a4a4a" stroke-width="1" stroke-dasharray="1,3" shape-rendering="crispEdges"/>
<path d="M660.5,282.5 H745.5 M702.5,198.5 V365.5" stroke="#0000ff" stroke-width="1" shape-rendering="crispEdges"/>
<path d="M655.0,277.3 L664.4000000000001,286.7 M664.4000000000001,277.3 L655.0,286.7" stroke="#ff0000" stroke-width="1"/>
<path d="M741.5999999999999,278.3 L749.0,285.7 M749.0,278.3 L741.5999999999999,285.7" stroke="#0000ff" stroke-width="1"/>
<rect x="699" y="230.8" width="7" height="7" fill="#ff00ff" rx="2"/>
<rect x="699" y="327.2" width="7" height="7" fill="#ff00ff" rx="2"/>
<text x="787.5" y="405.5" font-size="15" fill="#666666" text-anchor="middle" font-weight="normal" >Real Axis</text>
<text transform="translate(622,282) rotate(-90)" font-size="15" fill="#666666" text-anchor="middle">Imag Axis</text>
<text x="615.5" y="454" font-size="14.85" fill="#666666" text-anchor="middle" font-weight="bold" >Open-Loop Nichols Editor for Open Loop 1</text>
<rect x="349.5" y="461.5" width="533.0" height="167.0" fill="#fff" stroke="#5e5e5e" stroke-width="1"/>
<path d="M349.5,628.5 v-5.3 M349.5,461.5 v5.3" stroke="#5e5e5e"/>
<text x="348.7" y="648" font-size="12.5" fill="#666666" text-anchor="middle" font-weight="normal" >-180</text>
<path d="M482.8,628.5 v-5.3 M482.8,461.5 v5.3" stroke="#5e5e5e"/>
<text x="481.95" y="648" font-size="12.5" fill="#666666" text-anchor="middle" font-weight="normal" >-135</text>
<path d="M616.0,628.5 v-5.3 M616.0,461.5 v5.3" stroke="#5e5e5e"/>
<text x="615.2" y="648" font-size="12.5" fill="#666666" text-anchor="middle" font-weight="normal" >-90</text>
<path d="M749.2,628.5 v-5.3 M749.2,461.5 v5.3" stroke="#5e5e5e"/>
<text x="748.45" y="648" font-size="12.5" fill="#666666" text-anchor="middle" font-weight="normal" >-45</text>
<path d="M882.5,628.5 v-5.3 M882.5,461.5 v5.3" stroke="#5e5e5e"/>
<text x="881.7" y="648" font-size="12.5" fill="#666666" text-anchor="middle" font-weight="normal" >0</text>
<path d="M349.5,461.5 h5.3 M882.5,461.5 h-5.3" stroke="#5e5e5e"/>
<text x="343" y="466.8" font-size="12.5" fill="#666666" text-anchor="end" font-weight="normal" >0</text>
<path d="M349.5,498.6 h5.3 M882.5,498.6 h-5.3" stroke="#5e5e5e"/>
<text x="343" y="503.9111111111111" font-size="12.5" fill="#666666" text-anchor="end" font-weight="normal" >-20</text>
<path d="M349.5,535.7 h5.3 M882.5,535.7 h-5.3" stroke="#5e5e5e"/>
<text x="343" y="541.0222222222221" font-size="12.5" fill="#666666" text-anchor="end" font-weight="normal" >-40</text>
<path d="M349.5,572.8 h5.3 M882.5,572.8 h-5.3" stroke="#5e5e5e"/>
<text x="343" y="578.1333333333333" font-size="12.5" fill="#666666" text-anchor="end" font-weight="normal" >-60</text>
<path d="M349.5,609.9 h5.3 M882.5,609.9 h-5.3" stroke="#5e5e5e"/>
<text x="343" y="615.2444444444444" font-size="12.5" fill="#666666" text-anchor="end" font-weight="normal" >-80</text>
<path d="M882.2,472.2 L816.0,472.9 L751.0,474.9 L689.0,478.3 L630.6,482.9 L577.9,488.6 L530.9,495.4 L490.7,503.1 L472.6,507.4 L456.4,511.8 L442.8,516.1 L430.0,520.8 L418.8,525.6 L408.5,530.8 L399.3,536.3 L391.3,542.0 L384.0,548.1 L377.8,554.6 L372.0,562.0 L367.2,569.9 L363.1,578.5 L359.8,587.8 L357.0,598.1 L354.8,609.7 L354.8,628.5" stroke="#0000ff" fill="none" stroke-width="1.25"/>
<path d="M557.1,486.3 L566.1,495.3 M566.1,486.3 L557.1,495.3" stroke="#ff0000" stroke-width="1"/>
<path d="M667.1,476.0 L674.3000000000001,483.20000000000005 M674.3000000000001,476.0 L667.1,483.20000000000005" stroke="#0000ff" stroke-width="1"/>
<rect x="773" y="572" width="104" height="57" fill="#fff"/>
<text x="871.5" y="588.5" font-size="13" fill="#000" text-anchor="end" font-weight="normal" >G.M.: Inf @ Inf</text>
<text x="871.5" y="606" font-size="13" fill="#000" text-anchor="end" font-weight="normal" >P.M.: Inf @ NaN</text>
<text x="871.5" y="623" font-size="13" fill="#000" text-anchor="end" font-weight="normal" >Stable loop</text>
<text x="615.5" y="669.5" font-size="15" fill="#666666" text-anchor="middle" font-weight="normal" >Open-Loop Phase (deg)</text>
<text transform="translate(318,545.0) rotate(-90)" font-size="15" fill="#666666" text-anchor="middle">Open-Loop Gain (dB)</text>
</svg></body></html>
